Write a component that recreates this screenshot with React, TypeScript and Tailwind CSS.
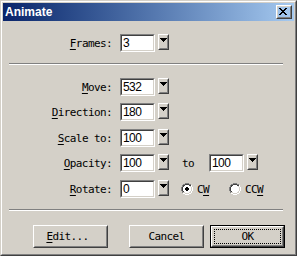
import React from "react";

type PixProps = { rows: string[]; colors: Record<string, string> };
function Pix({ rows, colors }: PixProps) {
  const w = rows[0].length;
  const h = rows.length;
  const rects: React.ReactNode[] = [];
  rows.forEach((r, y) =>
    r.split("").forEach((c, x) => {
      if (colors[c]) rects.push(<rect key={`${x}-${y}`} x={x} y={y} width={1} height={1} fill={colors[c]} />);
    })
  );
  return (
    <svg width={w} height={h} viewBox={`0 0 ${w} ${h}`} shapeRendering="crispEdges" className="block">
      {rects}
    </svg>
  );
}

const CLOSE_X = ["XX....XX", ".XX..XX.", "..XXXX..", "...XX...", "..XXXX..", ".XX..XX.", "XX....XX"];
const ARROW = ["XXXXXXX", ".XXXXX.", "..XXX..", "...X..."];
const RADIO_ON = [
  "....GGGG....",
  "..GGKKKKGG..",
  ".GKKWWWWKKH.",
  ".GKWWWWWWLH.",
  "GKWWWXXWWWLH",
  "GKWWXXXXWWLH",
  "GKWWXXXXWWLH",
  "GKWWWXXWWWLH",
  ".GKWWWWWWLH.",
  ".GLLWWWWLLH.",
  "..HHLLLLHH..",
  "....HHHH....",
];
const RADIO_OFF = RADIO_ON.map((r) => r.replace(/X/g, "W"));
const RADIO_COLORS = { G: "#808080", K: "#404040", W: "#ffffff", L: "#d4d0c8", H: "#ffffff", X: "#000000" };

function U({ children }: { children: React.ReactNode }) {
  return <span className="underline decoration-1 underline-offset-[2px]">{children}</span>;
}

function Field({ value }: { value: string }) {
  return (
    <div className="w-[35px] h-[18px] border border-t-[#808080] border-l-[#808080] border-r-white border-b-white shrink-0">
      <div className="w-full h-full border border-t-[#404040] border-l-[#404040] border-r-[#d4d0c8] border-b-[#d4d0c8] bg-white flex items-center pl-[1px] font-['Liberation_Sans',Arial,sans-serif] text-[12px] leading-none text-black">
        {value}
      </div>
    </div>
  );
}

function Drop() {
  return (
    <div className="self-start ml-[3px] w-[11px] h-[16px] border border-t-white border-l-white border-r-[#404040] border-b-[#404040] shrink-0">
      <div className="w-full h-full border border-t-[#d4d0c8] border-l-[#d4d0c8] border-r-[#808080] border-b-[#808080] flex justify-center items-start pt-[2px]">
        <Pix rows={ARROW} colors={{ X: "#000" }} />
      </div>
    </div>
  );
}

function Row({ label, value, className, children }: { label: React.ReactNode; value: string; className: string; children?: React.ReactNode }) {
  return (
    <div className={`flex items-center h-[18px] ${className}`}>
      <div className="w-[109px] text-right whitespace-pre">{label}</div>
      <div className="ml-[8px]">
        <Field value={value} />
      </div>
      <Drop />
      {children}
    </div>
  );
}

function Btn({ children, def, className }: { children: React.ReactNode; def?: boolean; className: string }) {
  const inner = (
    <div className="w-full h-full border border-t-white border-l-white border-r-[#404040] border-b-[#404040]">
      <div className="relative w-full h-full border border-t-[#d4d0c8] border-l-[#d4d0c8] border-r-[#808080] border-b-[#808080] flex items-center justify-center">
        {children}
        {def && <div className="absolute inset-[1px] border border-dotted border-black" />}
      </div>
    </div>
  );
  return (
    <div className={`w-[75px] h-[23px] shrink-0 ${def ? "border border-black" : ""} ${className}`}>{inner}</div>
  );
}

export default function App() {
  return (
    <div className="w-[297px] h-[256px] bg-[#d4d0c8] border border-t-[#d4d0c8] border-l-[#d4d0c8] border-r-[#404040] border-b-[#404040]">
      <div className="w-full h-full border border-t-white border-l-white border-r-[#808080] border-b-[#808080] p-px flex flex-col">
        <div className="h-[18px] shrink-0 flex items-center justify-between bg-linear-to-r from-[#0a246a] to-[#a6caf0]">
          <span className="pl-[2px] text-white font-bold font-['Liberation_Sans',Arial,sans-serif] text-[12px] leading-none">Animate</span>
          <div className="mr-[2px] w-[16px] h-[14px] border border-t-white border-l-white border-r-[#404040] border-b-[#404040]">
            <div className="w-full h-full border border-t-[#d4d0c8] border-l-[#d4d0c8] border-r-[#808080] border-b-[#808080] flex items-start pl-[1px] pt-[1px]">
              <Pix rows={CLOSE_X} colors={{ X: "#000" }} />
            </div>
          </div>
        </div>

        <div className="flex flex-col text-black font-['DejaVu_Sans_Mono',monospace] text-[11px] tracking-[-0.6px] leading-none">
          <Row className="mt-[13px]" label={<><U>F</U>rames:</>} value="3" />
          <div className="mt-[11px] ml-[6px] w-[274px] h-[2px] border-t border-t-[#808080] border-b border-b-white" />
          <Row className="mt-[13px]" label={<><U>M</U>ove:</>} value="532" />
          <Row className="mt-[7px]" label={<><U>D</U>irection:</>} value="180" />
          <Row className="mt-[8px]" label={<><U>S</U>cale to:</>} value="100" />
          <Row className="mt-[7px]" label={<><U>O</U>pacity:</>} value="100">
            <span className="ml-[13px] w-[12px]">to</span>
            <div className="ml-[15px]">
              <Field value="100" />
            </div>
            <Drop />
          </Row>
          <Row className="mt-[8px]" label={<><U>R</U>otate:</>} value="0">
            <div className="ml-[12px]">
              <Pix rows={RADIO_ON} colors={RADIO_COLORS} />
            </div>
            <span className="ml-[4px]">C<U>W</U></span>
            <div className="ml-[20px]">
              <Pix rows={RADIO_OFF} colors={RADIO_COLORS} />
            </div>
            <span className="ml-[4px]">CC<U>W</U></span>
          </Row>
          <div className="mt-[11px] ml-[6px] w-[274px] h-[2px] border-t border-t-[#808080] border-b border-b-white" />
          <div className="mt-[14px] flex">
            <Btn className="ml-[30px]">
              <span className="pr-[6px]"><U>E</U>dit...</span>
            </Btn>
            <Btn className="ml-[21px]">
              <span>Cancel</span>
            </Btn>
            <Btn className="ml-[6px]" def>
              <span>OK</span>
            </Btn>
          </div>
        </div>
      </div>
    </div>
  );
}
